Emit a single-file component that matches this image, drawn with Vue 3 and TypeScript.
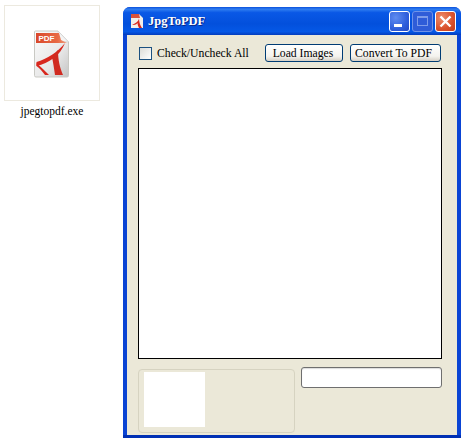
<template>
  <div class="desktop">
    <div class="file-item">
      <div class="file-thumb">
        <svg class="file-icon" width="36" height="50" viewBox="0 0 36 50">
          <defs>
            <linearGradient id="pageFill" x1="0" y1="0" x2="1" y2="1">
              <stop offset="0" stop-color="#fbfbfb" />
              <stop offset="0.6" stop-color="#e8e8e8" />
              <stop offset="1" stop-color="#c4c4c4" />
            </linearGradient>
            <linearGradient id="tabFill" x1="0" y1="0" x2="1" y2="0">
              <stop offset="0" stop-color="#d9472a" />
              <stop offset="0.7" stop-color="#e86a45" />
              <stop offset="1" stop-color="#f0a080" />
            </linearGradient>
          </defs>
          <path d="M0.500 2 Q0.500 1 1.500 1 H24 L34.500 12 V45.500 Q34.500 47 33 47 H2 Q0.500 47 0.500 45.500 Z" fill="url(#pageFill)" stroke="#c9c9c4" />
          <path d="M24 1 L24.500 11 L34.500 12 Z" fill="#f4f4f4" stroke="#cfcfcf" stroke-width="0.6" />
          <path d="M2 3 H25 L27 10 L33 13 H2 Z" fill="url(#tabFill)" />
          <text x="4.500" y="10.500" class="pdf-label">PDF</text>
          <path d="M2.500 32 C13 29 24 22 31 13 C26 26 15 33 2.500 36 Z" fill="#d8281e" />
          <path d="M18 27 L24 20 C24 30 26 38 29 45 L21 45 C20 38 19 32 18 27 Z" fill="#d02a20" />
          <path d="M2.500 33 C7 37 11 41 15 45 L11 45 C8 41 5.500 38 2.500 36 Z" fill="#d8281e" />
        </svg>
      </div>
      <div class="file-name">jpegtopdf.exe</div>
    </div>

    <div class="window">
      <div class="title-bar">
        <svg class="app-icon" width="14" height="16" viewBox="0 0 14 16">
          <path d="M1 1 H9 L13 5 V15 H1 Z" fill="#f1efea" />
          <path d="M1 1 H9 L10 5 H1 Z" fill="#d9523a" />
          <path d="M2 12 C6 10 9 8 9 5 C9 9 10 12 12 15 H9 C8 13 7.500 11 7.500 10 C6 12 4 12 2 12 Z" fill="#d8281e" />
        </svg>
        <span class="title-text">JpgToPDF</span>
        <div class="caption-buttons">
          <button class="caption-btn" aria-label="Minimize"><span class="min-glyph" /></button>
          <button class="caption-btn disabled" aria-label="Maximize"><span class="max-glyph" /></button>
          <button class="caption-btn close" aria-label="Close">
            <svg width="13" height="13" viewBox="0 0 13 13">
              <path d="M1.500 1.500 L11.500 11.500 M11.500 1.500 L1.500 11.500" stroke="#fff" stroke-width="2.400" />
            </svg>
          </button>
        </div>
      </div>

      <div class="window-body">
        <div class="toolbar">
          <label class="check-all">
            <input v-model="checkAll" type="checkbox" class="check-input" />
            <span class="check-box" />
            <span>Check/Uncheck All</span>
          </label>
          <button class="xp-btn load-btn">Load Images</button>
          <button class="xp-btn convert-btn">Convert To PDF</button>
        </div>

        <div class="image-list" />

        <div class="bottom-row">
          <div class="preview-group">
            <div class="preview" />
          </div>
          <div class="path-input" />
        </div>
      </div>
    </div>
  </div>
</template>

<script setup lang="ts">
import { ref } from "vue";

const checkAll = ref(false);
</script>

<style scoped>
.desktop {
  display: flex;
  align-items: flex-start;
  gap: 23px;
  width: 471px;
  height: 447px;
  box-sizing: border-box;
  padding: 5px 0 0 4px;
  overflow: hidden;
  background: #fff;
  font-family: "Liberation Serif", serif;
  font-size: 11.7px;
  color: #000;
}

.file-item {
  display: flex;
  flex-direction: column;
  align-items: center;
  width: 96px;
}

.file-thumb {
  display: flex;
  justify-content: center;
  padding-top: 24px;
  width: 96px;
  height: 96px;
  box-sizing: border-box;
  border: 1px solid #ece9df;
}

.file-icon {
  display: block;
}

.pdf-label {
  font-family: "Liberation Sans", sans-serif;
  font-size: 8px;
  font-weight: 700;
  fill: #fff;
}

.file-name {
  margin-top: 3px;
  font-size: 11.5px;
  line-height: 15px;
}

.window {
  width: 338px;
  height: 431px;
  margin-top: 2px;
  display: flex;
  flex-direction: column;
  border-radius: 7px 7px 0 0;
  overflow: hidden;
  background: linear-gradient(180deg, #0a44d4 calc(100% - 3px), #0030b4 calc(100% - 3px));
}

.title-bar {
  display: flex;
  align-items: center;
  flex: 0 0 28px;
  padding: 0 5px 0 7px;
  background: linear-gradient(180deg, #0a50dc 0%, #2f7df0 8%, #0a58e6 20%, #0350dc 60%, #0558e6 88%, #033cbc 100%);
}

.app-icon {
  display: block;
}

.title-text {
  margin-left: 4px;
  font-size: 12.5px;
  font-weight: 700;
  color: #fff;
  text-shadow: 1px 1px 0 #0a2a8c;
}

.caption-buttons {
  display: flex;
  gap: 2px;
  margin-left: auto;
}

.caption-btn {
  position: relative;
  display: flex;
  align-items: center;
  justify-content: center;
  width: 21px;
  height: 21px;
  padding: 0;
  border: 1px solid #fff;
  border-radius: 3px;
  background: radial-gradient(circle at 30% 30%, #5f8cf0 0%, #2f5fdc 60%, #2348c4 100%);
}

.caption-btn.disabled {
  border-color: #6f93e8;
  background: #2f5cd8;
}

.caption-btn.close {
  background: radial-gradient(circle at 30% 30%, #ee8d6c 0%, #d9512c 60%, #c23c1a 100%);
}

.min-glyph {
  position: absolute;
  left: 4px;
  bottom: 4px;
  width: 8px;
  height: 3px;
  background: #fff;
}

.max-glyph {
  width: 11px;
  height: 10px;
  box-sizing: border-box;
  border: 1px solid #7d9bea;
  border-top-width: 2px;
}

.window-body {
  flex: 1;
  margin: 0 4px 3px;
  padding: 9px 15px 0 11px;
  background: #ebe8d8;
  display: flex;
  flex-direction: column;
  min-height: 0;
}

.toolbar {
  display: flex;
  align-items: center;
  height: 18px;
}

.check-all {
  display: flex;
  align-items: center;
  gap: 5px;
  width: 126px;
  margin: 1px 0 0 1px;
}

.check-input {
  display: none;
}

.check-box {
  width: 13px;
  height: 13px;
  box-sizing: border-box;
  border: 1px solid #1c5180;
  background: linear-gradient(135deg, #dcdcd7 0%, #fff 100%);
}

.xp-btn {
  height: 18px;
  padding: 0;
  border: 1px solid #003c74;
  border-radius: 3px;
  background: linear-gradient(180deg, #fff 0%, #f4f3ee 70%, #d6d0c5 100%);
  font: inherit;
  color: #000;
  white-space: nowrap;
}

.load-btn {
  width: 78px;
  padding-right: 2px;
}

.convert-btn {
  width: 91px;
  margin-left: 7px;
  padding-right: 4px;
}

.image-list {
  height: 291px;
  margin-top: 6px;
  box-sizing: border-box;
  border: 1px solid #000;
  background: #fff;
}

.bottom-row {
  display: flex;
  align-items: flex-start;
  margin-top: 8px;
}

.preview-group {
  width: 157px;
  height: 64px;
  margin-top: 2px;
  box-sizing: border-box;
  padding: 2px 0 0 5px;
  border: 1px solid #d6d3c1;
  border-radius: 4px;
}

.preview {
  width: 61px;
  height: 55px;
  background: #fff;
}

.path-input {
  width: 141px;
  height: 21px;
  margin-left: 6px;
  box-sizing: border-box;
  border: 1px solid #6f6f6f;
  border-radius: 3px;
  background: #fff;
  box-shadow: inset 0 1px 1px #dcdcdc;
}
</style>

<style>
html,
body {
  background: #fff;
}
</style>
